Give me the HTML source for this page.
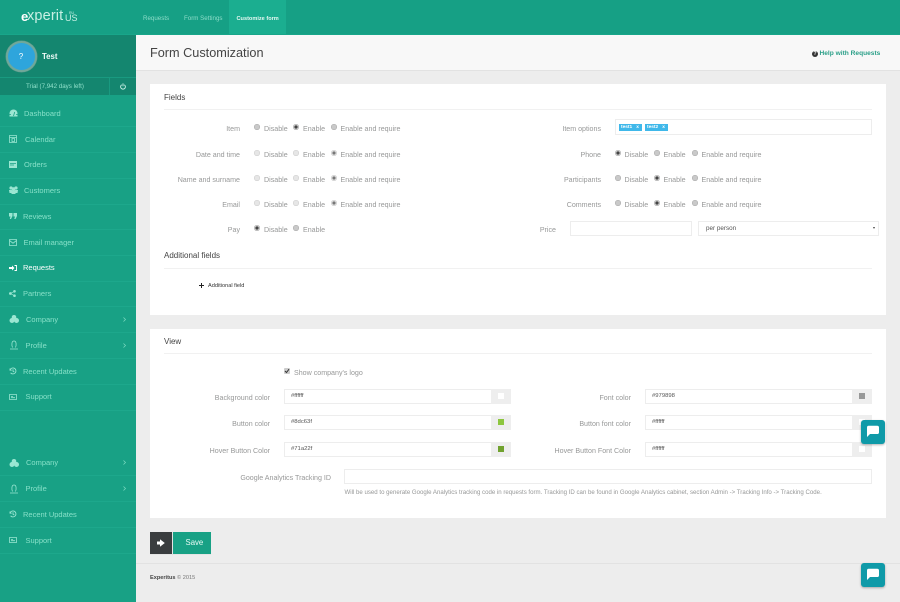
<!DOCTYPE html>
<html><head><meta charset="utf-8"><title>Form Customization</title>
<style>
html,body{margin:0;padding:0;width:900px;height:602px;overflow:hidden;background:#ededed;font-family:"Liberation Sans",sans-serif}
#w{position:absolute;left:0;top:0;width:900px;height:602px;overflow:hidden;filter:blur(.3px)}
.a,.t,.l,.r,.f,.n,.b,svg{position:absolute}
.a{display:block}
.t{font-size:7.1px;line-height:10px;color:#979898;white-space:nowrap;margin-top:-4.5px}
.l{font-size:7.1px;line-height:10px;color:#979898;white-space:nowrap;margin-top:-4.5px;text-align:right;width:160px}
.r{width:6px;height:6px;border-radius:50%;background:#c9c9c9;border:0;box-shadow:inset 0 0 0 .5px #aaa;margin-top:-3.5px}
.r.o{background:radial-gradient(circle,#444 0 1.4px,#d4d4d4 1.9px)}
.r.d{background:#e6e6e6;box-shadow:inset 0 0 0 .5px #ccc}
.r.od{background:radial-gradient(circle,#777 0 1.3px,#e2e2e2 1.9px);box-shadow:inset 0 0 0 .5px #ccc}
.f{background:#fff;border:1px solid #ededed;box-sizing:border-box;font-size:5.9px;line-height:13px;color:#555;padding-left:6px}
.n{left:0;width:136px;height:1px;background:#1da88c}
.s{position:absolute;font-size:7.5px;line-height:10px;margin-top:-4.5px;color:#86e0c8;white-space:nowrap}
.b{background:#eee}
.h{font-size:8px;color:#444;position:absolute;line-height:10px;margin-top:-4.5px;white-space:nowrap}
.i{fill:#9be6d2;stroke:none}
.c{fill:none;stroke:#9be6d2;stroke-width:.8}
</style></head>
<body><div id="w">
<!-- top bar -->
<div class="a" style="left:0;top:0;width:900px;height:35px;background:#16a085"></div>
<div class="a" style="left:229px;top:0;width:57px;height:35px;background:#1bae90"></div>
<div class="a" style="left:0;top:34px;width:900px;height:1px;background:#18a68a"></div>
<div class="a" style="left:27px;top:8px;font-size:14.5px;line-height:17px;color:#c8f0e4;letter-spacing:.15px;white-space:nowrap">xperit</div>
<div class="a" style="left:21px;top:8px;font-size:13px;line-height:17px;color:#fff;font-weight:700;white-space:nowrap">e</div>
<div class="a" style="left:65px;top:13px;font-size:9px;line-height:10px;color:#c8f0e4;white-space:nowrap">US</div>
<div class="a" style="left:69px;top:10.5px;font-size:3.5px;line-height:4px;color:#c8f0e4">RU</div>
<div class="s" style="left:143px;top:18px;font-size:6.2px;color:#8ddcc8">Requests</div>
<div class="s" style="left:184px;top:18px;font-size:6.2px;color:#8ddcc8">Form Settings</div>
<div class="s" style="left:236.5px;top:18px;font-size:5.6px;color:#e6f8f2;font-weight:700">Customize form</div>

<!-- sidebar -->
<div class="a" style="left:0;top:35px;width:136px;height:567px;background:#18a185"></div>
<div class="a" style="left:0;top:35px;width:136px;height:42px;background:#14866f"></div>
<div class="a" style="left:0;top:78px;width:136px;height:17px;background:#14866f"></div>
<div class="a" style="left:0;top:77px;width:136px;height:1px;background:#199a80"></div>
<div class="a" style="left:108.5px;top:78px;width:1px;height:17px;background:#199a80"></div>
<div class="a" style="left:5.5px;top:40.5px;width:27px;height:27px;border:2px solid #6fa89a;border-radius:50%;background:#2ea5dc;color:#fff;font-size:8px;line-height:27px;text-align:center;box-shadow:0 0 0 .5px #5d9888">?</div>
<div class="s" style="left:42px;top:56px;font-size:7.8px;color:#f0fbf8;font-weight:700">Test</div>
<div class="s" style="left:26px;top:86.5px;font-size:6.2px;color:#8fe0ca">Trial (7,942 days left)</div>
<svg style="left:119.5px;top:83px" width="6" height="7" viewBox="0 0 6 7"><path d="M1.7 1.7A2.4 2.4 0 1 0 4.3 1.7M3 .4V3.3" fill="none" stroke="#cdf2e7" stroke-width=".9"/></svg>

<div class="n" style="top:126px"></div><div class="n" style="top:152px"></div><div class="n" style="top:178px"></div><div class="n" style="top:204px"></div><div class="n" style="top:229px"></div><div class="n" style="top:255px"></div><div class="n" style="top:281px"></div><div class="n" style="top:306px"></div><div class="n" style="top:332px"></div><div class="n" style="top:358px"></div><div class="n" style="top:384px"></div><div class="n" style="top:410px"></div>
<div class="n" style="top:475px"></div><div class="n" style="top:501px"></div><div class="n" style="top:527px"></div><div class="n" style="top:553px"></div>

<div class="s" style="left:24px;top:113px">Dashboard</div>
<div class="s" style="left:25px;top:139px">Calendar</div>
<div class="s" style="left:24px;top:164.5px">Orders</div>
<div class="s" style="left:24px;top:190.5px">Customers</div>
<div class="s" style="left:23px;top:216px">Reviews</div>
<div class="s" style="left:23.5px;top:242px">Email manager</div>
<div class="s" style="left:23px;top:267.5px;color:#fff">Requests</div>
<div class="s" style="left:23px;top:293.5px">Partners</div>
<div class="s" style="left:26px;top:319px">Company</div>
<div class="s" style="left:25.5px;top:345px">Profile</div>
<div class="s" style="left:23px;top:371px">Recent Updates</div>
<div class="s" style="left:25.5px;top:396.5px">Support</div>
<div class="s" style="left:26px;top:462.5px">Company</div>
<div class="s" style="left:25.5px;top:488px">Profile</div>
<div class="s" style="left:23px;top:514px">Recent Updates</div>
<div class="s" style="left:25.5px;top:540px">Support</div>

<!-- sidebar icons -->
<svg style="left:9px;top:109px" width="9" height="8" viewBox="0 0 9 8"><path class="i" d="M.5 7.5V4.500A4 4 0 0 1 8.500 4.500V7.500Z"/><path d="M4.500 7L5.700 3M.5 5.500H2M7 5.500H8.500" stroke="#18a185" stroke-width=".8"/></svg>
<svg style="left:9px;top:134px" width="8" height="9" viewBox="0 0 8 9"><path class="c" d="M.5 1.500H7.500V8.500H.5ZM.5 3.500H7.500M3 4.500V7.500H5.500V4.500Z"/></svg>
<svg style="left:9px;top:161px" width="8" height="7" viewBox="0 0 8 7"><path class="i" d="M0 0H8V7H0Z"/><path d="M1 2.500H7M1 4H5" stroke="#18a185" stroke-width=".7"/></svg>
<svg style="left:9px;top:186px" width="9" height="8" viewBox="0 0 9 8"><circle class="i" cx="2" cy="2" r="1.600"/><circle class="i" cx="7" cy="2" r="1.600"/><circle class="i" cx="4.500" cy="3" r="1.800"/><path class="i" d="M0 4H3L2.500 7H.5ZM6 4H9L8.500 7H6.500ZM2.500 4.500H6.500V8H2.500Z"/></svg>
<svg style="left:9px;top:213px" width="8" height="6" viewBox="0 0 8 6"><path class="i" d="M0 0H3.500V3L2 6H.8L1.500 3.500H0ZM4.500 0H8V3L6.500 6H5.300L6 3.500H4.500Z"/></svg>
<svg style="left:9px;top:238.500px" width="8" height="7" viewBox="0 0 8 7"><path class="c" d="M.5 .5H7.500V6.500H.5ZM.5 1.500L4 4.200L7.500 1.500"/></svg>
<svg style="left:9px;top:264.500px" width="8" height="6" viewBox="0 0 8 6"><path d="M0 2H3V.5L5.500 3L3 5.500V4H0Z" fill="#fff"/><path d="M5.500 .5H7.500V5.500H5.500" fill="none" stroke="#fff" stroke-width=".9"/></svg>
<svg style="left:9px;top:290px" width="7" height="7" viewBox="0 0 7 7"><circle class="i" cx="5.500" cy="1.300" r="1.300"/><circle class="i" cx="5.500" cy="5.700" r="1.300"/><circle class="i" cx="1.400" cy="3.500" r="1.400"/><path d="M1.400 3.500L5.500 1.300M1.400 3.500L5.500 5.700" stroke="#9be6d2" stroke-width=".7"/></svg>
<svg style="left:9px;top:315px" width="10" height="8" viewBox="0 0 10 8"><circle class="i" cx="3" cy="5.500" r="2.500"/><circle class="i" cx="7.500" cy="5.500" r="2.500"/><circle class="i" cx="5" cy="2.300" r="2.300"/></svg>
<svg style="left:9.500px;top:340px" width="8" height="10" viewBox="0 0 8 10"><path class="c" d="M2.500 7.500C1.500 5 1.500 1 4 1S6.500 5 5.500 7.500M0 9H8"/></svg>
<svg style="left:9px;top:367px" width="8" height="8" viewBox="0 0 8 8"><path d="M1 1.500V3.200H2.700M1.100 3A3 3 0 1 1 1.600 5.800M4 2.200V4.200L5.300 5" fill="none" stroke="#9be6d2" stroke-width=".9"/></svg>
<svg style="left:9px;top:394px" width="8" height="6" viewBox="0 0 8 6"><path class="c" d="M.5 .5H7.500V5.500H.5ZM2 2.500H4M2 3.700H6"/></svg>
<svg style="left:9px;top:458.500px" width="10" height="8" viewBox="0 0 10 8"><circle class="i" cx="3" cy="5.500" r="2.500"/><circle class="i" cx="7.500" cy="5.500" r="2.500"/><circle class="i" cx="5" cy="2.300" r="2.300"/></svg>
<svg style="left:9.500px;top:483.500px" width="8" height="10" viewBox="0 0 8 10"><path class="c" d="M2.500 7.500C1.500 5 1.500 1 4 1S6.500 5 5.500 7.500M0 9H8"/></svg>
<svg style="left:9px;top:510px" width="8" height="8" viewBox="0 0 8 8"><path d="M1 1.500V3.200H2.700M1.100 3A3 3 0 1 1 1.600 5.800M4 2.200V4.200L5.300 5" fill="none" stroke="#9be6d2" stroke-width=".9"/></svg>
<svg style="left:9px;top:537px" width="8" height="6" viewBox="0 0 8 6"><path class="c" d="M.5 .5H7.500V5.500H.5ZM2 2.500H4M2 3.700H6"/></svg>
<svg style="left:122.500px;top:316.500px" width="3" height="5" viewBox="0 0 3 5"><path d="M.5 .5L2.500 2.500L.5 4.500" fill="none" stroke="#7fdcc3" stroke-width=".7"/></svg>
<svg style="left:122.500px;top:343px" width="3" height="5" viewBox="0 0 3 5"><path d="M.5 .5L2.500 2.500L.5 4.500" fill="none" stroke="#7fdcc3" stroke-width=".7"/></svg>
<svg style="left:122.500px;top:460px" width="3" height="5" viewBox="0 0 3 5"><path d="M.5 .5L2.500 2.500L.5 4.500" fill="none" stroke="#7fdcc3" stroke-width=".7"/></svg>
<svg style="left:122.500px;top:486px" width="3" height="5" viewBox="0 0 3 5"><path d="M.5 .5L2.500 2.500L.5 4.500" fill="none" stroke="#7fdcc3" stroke-width=".7"/></svg>

<!-- page head -->
<div class="a" style="left:136px;top:35px;width:764px;height:35px;background:#f8f8f8;border-bottom:1px solid #e2e2e2"></div>
<div class="a" style="left:150px;top:44px;font-size:12.7px;line-height:18px;color:#444;white-space:nowrap">Form Customization</div>
<div class="a" style="left:812px;top:50.500px;width:6px;height:6px;border-radius:50%;background:#333;color:#fff;font-size:5px;line-height:6px;text-align:center;font-weight:700">?</div>
<div class="s" style="left:819.500px;top:53px;font-size:6.600px;font-weight:700;color:#2a9f88">Help with Requests</div>

<!-- Fields card -->
<div class="a" style="left:150px;top:84px;width:736px;height:231px;background:#fff"></div>
<div class="h" style="left:164px;top:97.500px">Fields</div>
<div class="a" style="left:164px;top:109px;width:708px;height:1px;background:#f1f1f1"></div>

<div class="l" style="left:80px;top:128px">Item</div>
<div class="r" style="left:254px;top:127px"></div><div class="t" style="left:264px;top:128px">Disable</div>
<div class="r o" style="left:293px;top:127px"></div><div class="t" style="left:303px;top:128px">Enable</div>
<div class="r" style="left:331px;top:127px"></div><div class="t" style="left:340.500px;top:128px">Enable and require</div>

<div class="l" style="left:80px;top:154.500px">Date and time</div>
<div class="r d" style="left:254px;top:153.500px"></div><div class="t" style="left:264px;top:154.500px">Disable</div>
<div class="r d" style="left:293px;top:153.500px"></div><div class="t" style="left:303px;top:154.500px">Enable</div>
<div class="r od" style="left:331px;top:153.500px"></div><div class="t" style="left:340.500px;top:154.500px">Enable and require</div>

<div class="l" style="left:80px;top:179.500px">Name and surname</div>
<div class="r d" style="left:254px;top:178.500px"></div><div class="t" style="left:264px;top:179.500px">Disable</div>
<div class="r d" style="left:293px;top:178.500px"></div><div class="t" style="left:303px;top:179.500px">Enable</div>
<div class="r od" style="left:331px;top:178.500px"></div><div class="t" style="left:340.500px;top:179.500px">Enable and require</div>

<div class="l" style="left:80px;top:204px">Email</div>
<div class="r d" style="left:254px;top:203px"></div><div class="t" style="left:264px;top:204px">Disable</div>
<div class="r d" style="left:293px;top:203px"></div><div class="t" style="left:303px;top:204px">Enable</div>
<div class="r od" style="left:331px;top:203px"></div><div class="t" style="left:340.500px;top:204px">Enable and require</div>

<div class="l" style="left:80px;top:229px">Pay</div>
<div class="r o" style="left:254px;top:228px"></div><div class="t" style="left:264px;top:229px">Disable</div>
<div class="r" style="left:293px;top:228px"></div><div class="t" style="left:303px;top:229px">Enable</div>

<div class="l" style="left:441px;top:128px">Item options</div>
<div class="f" style="left:615px;top:119px;width:257px;height:16px"></div>
<div class="a" style="left:619px;top:124px;width:22.500px;height:7px;background:#3fb8ea;color:#fff;font-size:4.800px;line-height:7px;font-weight:700;padding-left:2px;box-sizing:border-box;white-space:nowrap">test1 &nbsp;&nbsp;x</div>
<div class="a" style="left:645px;top:124px;width:23px;height:7px;background:#3fb8ea;color:#fff;font-size:4.800px;line-height:7px;font-weight:700;padding-left:2px;box-sizing:border-box;white-space:nowrap">test2 &nbsp;&nbsp;x</div>

<div class="l" style="left:441px;top:154.500px">Phone</div>
<div class="r o" style="left:615px;top:153.500px"></div><div class="t" style="left:624.500px;top:154.500px">Disable</div>
<div class="r" style="left:654px;top:153.500px"></div><div class="t" style="left:663.500px;top:154.500px">Enable</div>
<div class="r" style="left:692px;top:153.500px"></div><div class="t" style="left:701.500px;top:154.500px">Enable and require</div>

<div class="l" style="left:441px;top:179.500px">Participants</div>
<div class="r" style="left:615px;top:178.500px"></div><div class="t" style="left:624.500px;top:179.500px">Disable</div>
<div class="r o" style="left:654px;top:178.500px"></div><div class="t" style="left:663.500px;top:179.500px">Enable</div>
<div class="r" style="left:692px;top:178.500px"></div><div class="t" style="left:701.500px;top:179.500px">Enable and require</div>

<div class="l" style="left:441px;top:204px">Comments</div>
<div class="r" style="left:615px;top:203px"></div><div class="t" style="left:624.500px;top:204px">Disable</div>
<div class="r o" style="left:654px;top:203px"></div><div class="t" style="left:663.500px;top:204px">Enable</div>
<div class="r" style="left:692px;top:203px"></div><div class="t" style="left:701.500px;top:204px">Enable and require</div>

<div class="l" style="left:396px;top:229px">Price</div>
<div class="f" style="left:570px;top:221px;width:122px;height:15px"></div>
<div class="f" style="left:698px;top:221px;width:181px;height:15px;padding-left:7px;font-size:6.3px">per person</div>
<div class="a" style="left:873px;top:227px;width:0;height:0;border-left:1.500px solid transparent;border-right:1.500px solid transparent;border-top:2.500px solid #444"></div>

<div class="h" style="left:164px;top:255.500px">Additional fields</div>
<div class="a" style="left:164px;top:268px;width:708px;height:1px;background:#f1f1f1"></div>
<svg style="left:199px;top:283px" width="5" height="5" viewBox="0 0 5 5"><path d="M2.500 0V5M0 2.500H5" stroke="#222" stroke-width="1"/></svg>
<div class="s" style="left:208px;top:285px;font-size:5.600px;color:#333">Additional field</div>

<!-- View card -->
<div class="a" style="left:150px;top:329px;width:736px;height:189px;background:#fff"></div>
<div class="h" style="left:164px;top:341.500px">View</div>
<div class="a" style="left:164px;top:353px;width:708px;height:1px;background:#f1f1f1"></div>
<svg style="left:284px;top:368px" width="6" height="6" viewBox="0 0 6 6"><rect width="6" height="6" rx="1" fill="#ccc"/><path d="M1 3L2.500 4.500L5 1.200" fill="none" stroke="#333" stroke-width="1"/></svg>
<div class="t" style="left:294px;top:372px">Show company's logo</div>

<div class="l" style="left:110px;top:397px">Background color</div>
<div class="f" style="left:284px;top:389px;width:227px;height:15px">#ffffff</div>
<div class="b" style="left:491px;top:389px;width:20px;height:15px"></div>
<div class="a" style="left:498px;top:393px;width:6px;height:6px;background:#fff"></div>

<div class="l" style="left:110px;top:423.500px">Button color</div>
<div class="f" style="left:284px;top:415px;width:227px;height:15px">#8dc63f</div>
<div class="b" style="left:491px;top:415px;width:20px;height:15px"></div>
<div class="a" style="left:498px;top:419px;width:6px;height:6px;background:#8dc63f"></div>

<div class="l" style="left:110px;top:450px">Hover Button Color</div>
<div class="f" style="left:284px;top:442px;width:227px;height:15px">#71a22f</div>
<div class="b" style="left:491px;top:442px;width:20px;height:15px"></div>
<div class="a" style="left:498px;top:446px;width:6px;height:6px;background:#71a22f"></div>

<div class="l" style="left:471px;top:397px">Font color</div>
<div class="f" style="left:645px;top:389px;width:227px;height:15px">#979898</div>
<div class="b" style="left:852px;top:389px;width:20px;height:15px"></div>
<div class="a" style="left:859px;top:393px;width:6px;height:6px;background:#979898"></div>

<div class="l" style="left:471px;top:423.500px">Button font color</div>
<div class="f" style="left:645px;top:415px;width:227px;height:15px">#ffffff</div>
<div class="b" style="left:852px;top:415px;width:20px;height:15px"></div>
<div class="a" style="left:859px;top:419px;width:6px;height:6px;background:#fff"></div>

<div class="l" style="left:471px;top:450px">Hover Button Font Color</div>
<div class="f" style="left:645px;top:442px;width:227px;height:15px">#ffffff</div>
<div class="b" style="left:852px;top:442px;width:20px;height:15px"></div>
<div class="a" style="left:859px;top:446px;width:6px;height:6px;background:#fff"></div>

<div class="l" style="left:171px;top:477px">Google Analytics Tracking ID</div>
<div class="f" style="left:344px;top:469px;width:528px;height:15px"></div>
<div class="t" style="left:344.500px;top:492.500px;font-size:6.100px">Will be used to generate Google Analytics tracking code in requests form. Tracking ID can be found in Google Analytics cabinet, section Admin -&gt; Tracking Info -&gt; Tracking Code.</div>

<!-- save -->
<div class="a" style="left:150px;top:532px;width:61px;height:23px;background:#e4e4e4"></div>
<div class="a" style="left:150px;top:532px;width:22px;height:22px;background:#3a3d3f"></div>
<div class="a" style="left:173px;top:532px;width:38px;height:22px;background:#18a185;color:#e8faf5;font-size:7.800px;line-height:22px;text-indent:12.500px">Save</div>
<svg style="left:157px;top:539px" width="8" height="8" viewBox="0 0 8 8"><path d="M0 2.500H3V.3L7.800 4L3 7.700V5.500H0Z" fill="#fff"/></svg>

<!-- footer -->
<div class="a" style="left:136px;top:563px;width:764px;height:1px;background:#e2e2e2"></div>
<div class="s" style="left:150px;top:577px;font-size:5.600px;color:#777"><b style="color:#444">Experitus</b> © 2015</div>

<!-- chat -->
<div class="a" style="left:861px;top:420px;width:24px;height:24px;border-radius:3px;background:#0f9aa8;box-shadow:0 1px 2px rgba(0,0,0,.3)"></div>
<svg style="left:866px;top:425px" width="14" height="14" viewBox="0 0 14 14"><path d="M2.500 .8H11.200Q13 .8 13 2.600V7.200Q13 9 11.200 9H4L1 12V2.600Q1 .8 2.500 .8Z" fill="#fff"/></svg>
<div class="a" style="left:861px;top:562.500px;width:24px;height:24px;border-radius:3px;background:#0f9aa8;box-shadow:0 1px 2px rgba(0,0,0,.3)"></div>
<svg style="left:866px;top:567.500px" width="14" height="14" viewBox="0 0 14 14"><path d="M2.500 .8H11.200Q13 .8 13 2.600V7.200Q13 9 11.200 9H4L1 12V2.600Q1 .8 2.500 .8Z" fill="#fff"/></svg>
</div></body></html>
